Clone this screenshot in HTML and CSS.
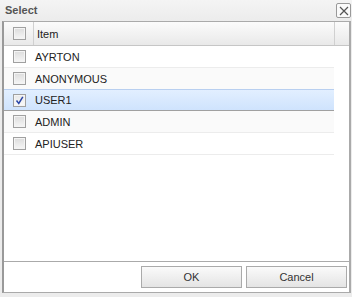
FILE: index.html
```html
<!DOCTYPE html>
<html lang="en">
<head>
<meta charset="UTF-8">
<title>Select</title>
<link rel="stylesheet" href="styles.css">
</head>
<body>

<div class="dialog">
  <div class="titlebar">
    <span class="title">Select</span>
    <button class="close-btn" title="Close">
      <svg width="10" height="10" viewBox="0 0 10 10"><path d="M1 1L9 9M9 1L1 9" stroke="#555" stroke-width="1.2"/></svg>
    </button>
  </div>

  <div class="panel">
    <div class="grid">
      <div class="grid-head">
        <div class="cell-check"><span class="chk"></span></div>
        <div class="cell-name">Item</div>
        <div class="cell-scroll"></div>
      </div>
      <div class="grid-body">
        <div class="row"><div class="cell-check"><span class="chk"></span></div><div class="cell-name">AYRTON</div></div>
        <div class="row alt"><div class="cell-check"><span class="chk"></span></div><div class="cell-name">ANONYMOUS</div></div>
        <div class="row selected"><div class="cell-check"><span class="chk checked">
          <svg width="9" height="9" viewBox="0 0 9 9"><path d="M1.5 4.5L3.8 7.5L7.8 0.8" stroke="#2a46a8" stroke-width="1.5" fill="none"/></svg>
        </span></div><div class="cell-name">USER1</div></div>
        <div class="row alt"><div class="cell-check"><span class="chk"></span></div><div class="cell-name">ADMIN</div></div>
        <div class="row"><div class="cell-check"><span class="chk"></span></div><div class="cell-name">APIUSER</div></div>
      </div>
    </div>
    <div class="footer">
      <button class="btn">OK</button>
      <button class="btn">Cancel</button>
    </div>
  </div>
</div>

</body>
</html>
```
FILE: styles.css
```css
body, html {
  margin: 0;
  height: 100%;
  background: #e8e8e8;
  font-family: 'Liberation Sans', Arial, sans-serif;
  font-size: 11px;
  color: #222;
}

.dialog {
  width: 352px;
  height: 297px;
  background: #ececec;
}

.titlebar {
  height: 21px;
  display: flex;
  align-items: center;
  justify-content: space-between;
  padding: 0 1px 0 5px;
  background: linear-gradient(#f4f4f4, #ececec);
}

.title {
  font-weight: bold;
  font-size: 11px;
  color: #555;
  margin-top: -1px;
}

.close-btn {
  width: 15px;
  height: 15px;
  padding: 0;
  border: 1px solid #999;
  border-radius: 2px;
  background: #fafafa;
  display: flex;
  align-items: center;
  justify-content: center;
}

.panel {
  margin: 0 1px 0 2px;
  height: 272px;
  box-sizing: border-box;
  border: 1px solid #aaa;
  border-left: 2px solid #999;
  border-right: 2px solid #aaa;
  background: #fff;
  display: flex;
  flex-direction: column;
}

.grid {
  height: 239px;
  border-bottom: 1px solid #aaa;
}

.grid-head {
  height: 23px;
  display: flex;
  border-bottom: 1px solid #c6c6c6;
  background: linear-gradient(#fbfbfb, #e9e9e9);
}

.grid-head .cell-check {
  border-right: 1px solid #d0d0d0;
}

.grid-head .cell-name {
  flex: 1;
  border-right: 1px solid #d0d0d0;
}

.cell-scroll {
  width: 14px;
}

.cell-check {
  width: 27px;
  display: flex;
  align-items: center;
  justify-content: center;
  padding-left: 2px;
}

.cell-name {
  display: flex;
  align-items: center;
  padding-left: 3px;
}

.row .cell-name {
  padding-left: 2px;
}

.grid-body {
  margin-right: 15px;
}

.row {
  height: 21px;
  display: flex;
  border-bottom: 1px solid #ececec;
}

.row.alt {
  background: #fafafa;
}

.row.selected {
  height: 20px;
  background: linear-gradient(#e2efff, #cfe3fd);
  border-top: 1px solid #b8cff0;
  border-bottom: 1px solid #a0a0a0;
  margin-top: -1px;
}

.chk {
  width: 11px;
  height: 11px;
  border: 1px solid #a0a0a0;
  box-shadow: inset 0 0 0 1px #f4f4f4;
  background: linear-gradient(#dcdcdc, #f6f6f6);
  display: flex;
  align-items: center;
  justify-content: center;
}

.chk.checked {
  background: linear-gradient(#e8e8e8, #fafafa);
}

.footer {
  flex: 1;
  display: flex;
  justify-content: flex-end;
  align-items: center;
  gap: 4px;
  padding-right: 2px;
}

.btn {
  width: 101px;
  height: 22px;
  border: 1px solid #aaa;
  background: linear-gradient(#fafafa, #e4e4e4);
  font-family: 'Liberation Sans', Arial, sans-serif;
  font-size: 11px;
  color: #333;
  padding: 0;
}
```
